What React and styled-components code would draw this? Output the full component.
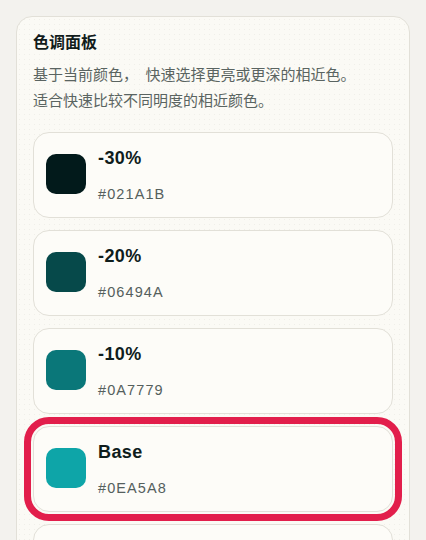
import React from 'react';
import styled, { createGlobalStyle } from 'styled-components';

const GlobalStyle = createGlobalStyle`
    body {
        margin: 0;
        background: #f3f2ee;
        font-family: "Liberation Sans", "Noto Sans CJK SC", sans-serif;
    }
`

const Page = styled.div`
    padding: 16px;
`

const Panel = styled.section`
    border: 1px solid #e2e0d8;
    border-radius: 16px;
    padding: 14px 16px 16px;
    background-color: #fbfaf5;
    background-image: radial-gradient(circle, rgba(120, 115, 95, 0.08) 0.7px, transparent 0.9px);
    background-size: 5px 5px;
`

const Title = styled.h2`
    margin: 0;
    font-size: 16px;
    line-height: 24px;
    font-weight: 700;
    color: #121c1b;
`

const Desc = styled.p`
    margin: 7px 0 18px;
    font-size: 15px;
    line-height: 26px;
    color: #5a6461;
`

const List = styled.div`
    display: flex;
    flex-direction: column;
    gap: 12px;
`

const Item = styled.div`
    display: flex;
    align-items: center;
    gap: 12px;
    height: 86px;
    box-sizing: border-box;
    padding: 0 12px;
    border: 1px solid #e2e0d8;
    border-radius: 16px;
    background: #fdfcf8;
    outline: ${p => (p.$active ? '7px solid #e21e4b' : 'none')};
    outline-offset: 2px;
`

const Swatch = styled.div`
    width: 40px;
    height: 40px;
    flex: none;
    border-radius: 10px;
    background: ${p => p.$color};
    margin-top: -2px;
`

const Info = styled.div`
    display: flex;
    flex-direction: column;
    gap: 14px;
`

const Label = styled.div`
    font-size: 18px;
    line-height: 24px;
    font-weight: 700;
    letter-spacing: 0.4px;
    color: #0f1d1c;
`

const Hex = styled.div`
    font-size: 14.5px;
    line-height: 20px;
    color: #55605d;
    letter-spacing: 1.1px;
`

const shades = [
    { label: '-30%', hex: '#021A1B' },
    { label: '-20%', hex: '#06494A' },
    { label: '-10%', hex: '#0A7779' },
    { label: 'Base', hex: '#0EA5A8', active: true },
    { label: '+10%', hex: '#3EB7B9' },
    { label: '+20%', hex: '#6EC9CB' },
]

const App = () => {
    return (
        <Page>
            <GlobalStyle />
            <Panel>
                <Title>色调面板</Title>
                <Desc>
                    基于当前颜色，{'\u2002'}快速选择更亮或更深的相近色。<br />
                    适合快速比较不同明度的相近颜色。
                </Desc>
                <List>
                    {shades.map(s => (
                        <Item key={s.label} $active={s.active}>
                            <Swatch $color={s.hex} />
                            <Info>
                                <Label>{s.label}</Label>
                                <Hex>{s.hex}</Hex>
                            </Info>
                        </Item>
                    ))}
                </List>
            </Panel>
        </Page>
    );
}

export default App;
